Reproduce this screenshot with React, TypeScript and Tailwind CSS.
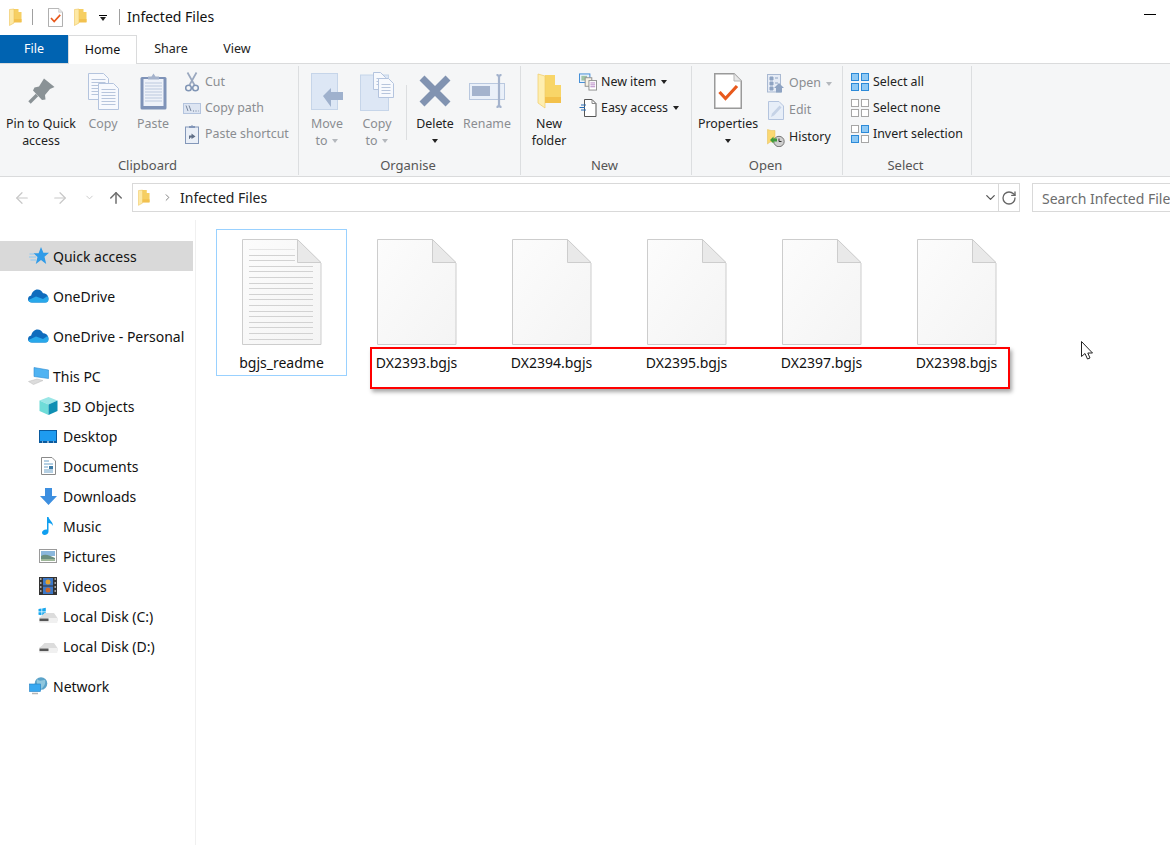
import type { ReactNode } from "react"
import { ArrowLeft, ArrowRight, ArrowUp, ChevronDown, ChevronRight, RotateCw } from "lucide-react"

function Folder({ w = 13, h = 18 }: { w?: number; h?: number }) {
  return (
    <svg width={w} height={h} viewBox="0 0 13 18" className="shrink-0">
      <path d="M4 1H9.5V4H12.5V14H4Z" fill="#f6cf63" />
      <path d="M0.5 1.5L5 1V15L0.5 17.5Z" fill="#fde9a5" stroke="#eec45c" strokeWidth="0.6" />
      <path d="M5 11H12.5V14.5H5Z" fill="#f2c14f" />
    </svg>
  )
}

function CheckDoc({ w, h }: { w: number; h: number }) {
  return (
    <svg width={w} height={h} viewBox="0 0 28 36" className="shrink-0">
      <path d="M0.75 0.75H20L27.25 8V35.25H0.75Z" fill="#fff" stroke="#9a9a9a" strokeWidth="1.5" />
      <path d="M20 0.75V8H27.25" fill="#e8e8e8" stroke="#b5b5b5" />
      <path d="M5.5 19L11.5 25.5L23 13" fill="none" stroke="#e8591c" strokeWidth="3.2" />
    </svg>
  )
}

function Pin() {
  return (
    <svg width="27" height="26" viewBox="0 0 27 26">
      <path d="M16 0.5L26.5 9L22 11L17 17L17.5 21.5L14 22L5 12.5L6.5 9.5L11 8.5Z" fill="#8a9296" />
      <path d="M9 17L1.5 24.5" stroke="#8a9296" strokeWidth="3.4" />
    </svg>
  )
}

function MiniDoc({ x, y, w, h, fill = "#f7f9fd", stroke = "#b4c4de" }: { x: number; y: number; w: number; h: number; fill?: string; stroke?: string }) {
  const lines: number[] = []
  for (let ly = y + 6; ly < y + h - 2; ly += 3) lines.push(ly)
  return (
    <g>
      <path d={`M${x} ${y}H${x + w - 5}L${x + w} ${y + 5}V${y + h}H${x}Z`} fill={fill} stroke={stroke} />
      {lines.map((ly) => (
        <path key={ly} d={`M${x + 3} ${ly}H${x + w - 3}`} stroke="#b7c5dc" strokeWidth="1" />
      ))}
    </g>
  )
}

function CopyIcon() {
  return (
    <svg width="31" height="37" viewBox="0 0 31 37">
      <MiniDoc x={0.5} y={0.5} w={20} h={26} />
      <MiniDoc x={10.5} y={10.5} w={20} h={26} />
    </svg>
  )
}

function PasteIcon() {
  return (
    <svg width="27" height="37" viewBox="0 0 27 37">
      <rect x="0.5" y="4" width="26" height="32.5" rx="1.5" fill="#7f93b8" />
      <rect x="3.5" y="6" width="20" height="27" fill="#eef2f9" />
      {[10, 13, 16, 19, 22, 25, 28].map((y) => (
        <path key={y} d={`M5 ${y}H22`} stroke="#bcc9de" />
      ))}
      <path d="M8 6V3.5H11.5L13.5 0.5L15.5 3.5H19V6.5H8Z" fill="#a5b3cc" />
    </svg>
  )
}

function CutIcon() {
  return (
    <svg width="14" height="20" viewBox="0 0 14 20">
      <path d="M2.5 0.5L9.5 13M11.5 0.5L4.5 13" stroke="#9aa8bf" strokeWidth="1.7" fill="none" />
      <circle cx="3.5" cy="16" r="2.8" fill="none" stroke="#8095b5" strokeWidth="1.5" />
      <circle cx="10.5" cy="16" r="2.8" fill="none" stroke="#8095b5" strokeWidth="1.5" />
    </svg>
  )
}

function CopyPathIcon() {
  return (
    <svg width="18" height="11" viewBox="0 0 18 11">
      <rect x="0.5" y="0.5" width="17" height="10" fill="#dde5f2" stroke="#b4c4de" />
      <path d="M3 2.5L5 8M6 2.5L8 8" stroke="#6d7c94" strokeWidth="0.9" />
      <path d="M10 8H11M12.5 8H13.5M15 8H15.6" stroke="#6d7c94" />
    </svg>
  )
}

function PasteShortcutIcon() {
  return (
    <svg width="14" height="19" viewBox="0 0 14 19">
      <rect x="0.5" y="2" width="13" height="16.5" fill="#eaeff7" stroke="#8397b9" />
      <path d="M4 3V1H6L7 0L8 1H10V3Z" fill="#8397b9" />
      <path d="M4 14V10.5H6.5V8.5L10.5 11.5L6.5 14V12.5H5.5L4.5 14Z" fill="#5f6e86" />
    </svg>
  )
}

function MoveIcon() {
  return (
    <svg width="33" height="37" viewBox="0 0 33 37">
      <rect x="0.5" y="0.5" width="26" height="36" fill="#dde7f5" stroke="#c6d5e9" />
      <path d="M12 25L20 17V21H32V29H20V36Z" fill="#9fb1cd" transform="translate(0 -2)" />
    </svg>
  )
}

function CopyToIcon() {
  return (
    <svg width="34" height="39" viewBox="0 0 34 39">
      <rect x="0.5" y="3" width="28" height="35.5" fill="#dde7f5" stroke="#c6d5e9" />
      <MiniDoc x={13.5} y={0.5} w={12} h={17} />
      <MiniDoc x={18.5} y={6.5} w={15} h={19} />
    </svg>
  )
}

function DeleteIcon() {
  return (
    <svg width="32" height="32" viewBox="0 0 32 32">
      <path d="M3 3L29 29M29 3L3 29" stroke="#8193b1" strokeWidth="7" />
    </svg>
  )
}

function RenameIcon() {
  return (
    <svg width="37" height="34" viewBox="0 0 37 34">
      <rect x="0.5" y="9.5" width="35" height="16" fill="#eaf0f9" stroke="#b9c8df" />
      <rect x="3" y="12" width="18" height="10" fill="#a4b3cd" />
      <path d="M27.5 1C29 1 30 2 30 3.5C30 2 31 1 32.5 1M30 3V31M27.5 33C29 33 30 32 30 30.5C30 32 31 33 32.5 33" fill="none" stroke="#a4b3cd" strokeWidth="2.2" />
    </svg>
  )
}

function NewItemIcon() {
  return (
    <svg width="19" height="18" viewBox="0 0 19 18">
      <rect x="0.5" y="0.5" width="11" height="9" fill="#e8f1fb" stroke="#3d8bd6" />
      <rect x="2.5" y="2.5" width="6" height="5" fill="#9fc3a4" />
      <rect x="6.5" y="4.5" width="7" height="9" fill="#f7f1e3" stroke="#8f8f8f" />
      <rect x="10.5" y="7.5" width="8" height="10" fill="#fff" stroke="#8f8f8f" />
      <path d="M12 10H17M12 12H17M12 14H17" stroke="#b27fc2" />
    </svg>
  )
}

function EasyAccessIcon() {
  return (
    <svg width="18" height="18" viewBox="0 0 18 18">
      <path d="M5.5 0.5H13L17 4.5V17.5H5.5Z" fill="#fff" stroke="#555" />
      <path d="M13 0.5V4.5H17" fill="none" stroke="#888" />
      <path d="M2 6H7M0.5 8.5H6M2 11H7" stroke="#2a6fb8" />
    </svg>
  )
}

function NewFolderIcon() {
  return (
    <svg width="25" height="36" viewBox="0 0 25 36">
      <path d="M8 2H18V12H24V30H8Z" fill="#f8d568" />
      <path d="M1 1L8 3V35L1 30Z" fill="#feeeb0" stroke="#f0cc68" strokeWidth="0.7" />
      <path d="M8 24H24V30H8Z" fill="#f3c14b" />
    </svg>
  )
}

function OpenIcon() {
  return (
    <svg width="18" height="19" viewBox="0 0 18 19">
      <rect x="0.5" y="0.5" width="13" height="17.5" fill="#e5ebf5" stroke="#a9b9d2" />
      <path d="M3 3H6V6H3ZM3 8H6V11H3ZM3 13H6V16H3ZM8 4H11M8 9H11" fill="#8ea3c2" stroke="#8ea3c2" />
      <path d="M7 14L12 9L17 14H15V18.5H9V14Z" fill="#8ea3c2" />
    </svg>
  )
}

function EditIcon() {
  return (
    <svg width="16" height="19" viewBox="0 0 16 19">
      <path d="M0.5 0.5H11L15.5 5V18.5H0.5Z" fill="#e7eef8" stroke="#b4c4de" />
      <path d="M3 16L4 12.5L11.5 4.5L13.5 6.5L6 14.5Z" fill="#c5d2e6" />
    </svg>
  )
}

function HistoryIcon() {
  return (
    <svg width="18" height="18" viewBox="0 0 18 18">
      <path d="M0.5 0.5L4 1.5H8V13H3L0.5 15Z" fill="#fbd872" stroke="#e4bd55" strokeWidth="0.5" />
      <circle cx="12" cy="12.5" r="5.2" fill="#cfcfcf" stroke="#777" />
      <path d="M12 9.5V12.5H14.5" stroke="#333" fill="none" />
      <path d="M3 11L6.5 7.5V9.5H10V12.5H6.5V14.5Z" fill="#3f9b3b" />
    </svg>
  )
}

function SelectIcon({ filled }: { filled: number[] }) {
  const cells = [
    [0, 0],
    [10, 0],
    [0, 10],
    [10, 10],
  ]
  return (
    <svg width="18" height="18" viewBox="0 0 18 18">
      {cells.map(([x, y], i) => (
        <rect
          key={i}
          x={x + 0.5}
          y={y + 0.5}
          width="7"
          height="7"
          fill={filled.includes(i) ? "#8ec9f5" : "#fff"}
          stroke={filled.includes(i) ? "#2c8ad8" : "#a6a6a6"}
        />
      ))}
    </svg>
  )
}

function FileIcon({ lines }: { lines?: boolean }) {
  const rows: number[] = []
  for (let y = 10; y < 102; y += 5.6) rows.push(Math.round(y) + 0.5)
  return (
    <svg width="80" height="107" viewBox="0 0 80 107">
      <defs>
        <linearGradient id="pageFill" x1="0" y1="0" x2="1" y2="1">
          <stop offset="0" stopColor="#fcfcfc" />
          <stop offset="1" stopColor="#f4f4f4" />
        </linearGradient>
      </defs>
      <path d="M0.5 0.5H55.5L79 24V105.5H0.5Z" fill="url(#pageFill)" stroke="#cdcdcd" />
      <path d="M55.5 0.5V23.5H79Z" fill="#e9e9e9" stroke="#cdcdcd" />
      {lines &&
        rows.map((y) => (
          <path key={y} d={`M7 ${y}H${y < 24 ? 53 : 71}`} stroke={y < 14 ? "#e5e5e5" : "#d2d2d2"} />
        ))}
    </svg>
  )
}

function StarIcon() {
  return (
    <svg width="20" height="18" viewBox="0 0 20 18">
      <path d="M12 0L14.4 5.8H20L15.5 9.8L17.2 17L12 13L6.8 17L8.5 10L4.5 6.2H9.6Z" fill="#2f9be8" />
      <path d="M0.5 7H5M0 10H7M1.5 13H7" stroke="#8cc8f2" />
    </svg>
  )
}

function CloudIcon() {
  return (
    <svg width="21" height="14" viewBox="0 0 21 14">
      <path d="M4 13.5C1.5 13.5 0 12 0 10C0 8 1.5 6.8 3.2 6.5C4 3 6.5 0.5 9.5 0.5C12 0.5 14 2 15 4.3C18 4.3 20.5 6.5 20.5 9.8C20.5 12 19 13.5 17 13.5Z" fill="#0f6cbd" />
      <path d="M4 13.5C1.5 13.5 0.5 12.5 0.5 11L8 7.5L15 10L19.5 7C20.5 8.5 20.8 11.5 20 12.5C19 13.5 18 13.5 17 13.5Z" fill="#28a8ea" />
    </svg>
  )
}

function PcIcon() {
  return (
    <svg width="21" height="18" viewBox="0 0 21 18">
      <path d="M6 0.5L20.5 3V11.5L6 9.5Z" fill="#4fb3f2" stroke="#2e8bd0" strokeWidth="0.6" />
      <path d="M0.5 14.5L9 12L15 13.5L5.5 17.5Z" fill="#dcdcdc" stroke="#bdbdbd" strokeWidth="0.5" />
    </svg>
  )
}

function CubeIcon() {
  return (
    <svg width="19" height="18" viewBox="0 0 19 18">
      <path d="M9.5 0L18.5 3.5L9.5 7.5L0.5 3.5Z" fill="#9ae6e6" />
      <path d="M0.5 3.5L9.5 7.5V18L0.5 14Z" fill="#6fdcd8" />
      <path d="M18.5 3.5L9.5 7.5V18L18.5 14Z" fill="#0f8fb3" />
    </svg>
  )
}

function DesktopIcon() {
  return (
    <svg width="18" height="13" viewBox="0 0 18 13">
      <rect width="18" height="13" fill="#0a5a9e" />
      <rect x="1" y="1" width="16" height="10" fill="#1e9bf0" />
      <path d="M3 12H4M8 12H10M14 12H15" stroke="#fff" />
    </svg>
  )
}

function DocumentsIcon() {
  return (
    <svg width="15" height="18" viewBox="0 0 15 18">
      <path d="M0.5 0.5H11L14.5 4V17.5H0.5Z" fill="#fff" stroke="#8a8a8a" />
      <path d="M3 4H8M3 7H12M3 10H7M3 13H12M3 15H12" stroke="#6aa0c8" />
      <rect x="8" y="9" width="4" height="3" fill="#3d7ca8" />
    </svg>
  )
}

function DownloadIcon() {
  return (
    <svg width="17" height="17" viewBox="0 0 17 17">
      <path d="M5 0H12V8H17L8.5 17L0 8H5Z" fill="#3d8fe0" />
    </svg>
  )
}

function MusicIcon() {
  return (
    <svg width="12" height="18" viewBox="0 0 12 18">
      <path d="M5 0H6.5C7 3 11 4.5 11 9C10 7 8.5 6 6.5 6V14.5C6.5 16.5 4.5 18 2.5 18C1 18 0 17 0 15.5C0 13.5 2.5 12 5 12.5Z" fill="#0f9ff0" />
    </svg>
  )
}

function PicturesIcon() {
  return (
    <svg width="18" height="14" viewBox="0 0 18 14">
      <rect x="0.5" y="0.5" width="17" height="13" fill="#fff" stroke="#9a9a9a" />
      <rect x="2" y="2" width="14" height="5" fill="#8ab7dc" />
      <path d="M2 7C6 4.5 10 6 16 9V12H2Z" fill="#6b8f80" />
      <path d="M2 10H16V12H2Z" fill="#9fb89a" />
    </svg>
  )
}

function VideosIcon() {
  return (
    <svg width="18" height="18" viewBox="0 0 18 18">
      <rect width="18" height="18" fill="#333" />
      <path d="M1 2H2.5M1 6H2.5M1 10H2.5M1 14H2.5M15.5 2H17M15.5 6H17M15.5 10H17M15.5 14H17" stroke="#ccc" strokeWidth="1.5" />
      <rect x="4" y="1" width="10" height="7.5" fill="#3c78c8" />
      <rect x="4" y="9.5" width="10" height="7.5" fill="#3c78c8" />
      <circle cx="9" cy="5" r="2.5" fill="#e0a030" />
      <circle cx="9" cy="13" r="2.5" fill="#c8682e" />
    </svg>
  )
}

function DiskIcon({ win }: { win?: boolean }) {
  return (
    <svg width="20" height="18" viewBox="0 0 20 18">
      {win && <path d="M0.5 2L3.5 1.5V4.5H0.5ZM4.2 1.4L7.8 0.8V4.5H4.2ZM0.5 5.2H3.5V8.2L0.5 7.8ZM4.2 5.2H7.8V8.9L4.2 8.3Z" fill="#17a7ee" />}
      <path d="M3.5 9L6.5 6H16L19.5 11V14H1V11Z" fill="#dcdcdc" />
      <path d="M1 11H19.5V15C19.5 15.5 19 16 18.5 16H2C1.5 16 1 15.5 1 15Z" fill="#f0f0f0" />
      <rect x="1.5" y="11.5" width="9" height="2.6" fill="#555" />
    </svg>
  )
}

function NetworkIcon() {
  return (
    <svg width="20" height="18" viewBox="0 0 20 18">
      <circle cx="12" cy="6.5" r="6.3" fill="#5ba3c9" />
      <path d="M8 2C10 5 14 3 16 3C17 6 15 10 12 12C9 10 7 6 8 2Z" fill="#8fc7de" />
      <rect x="0.5" y="7" width="11" height="7.5" fill="#38a8f0" stroke="#1f7fc4" strokeWidth="0.6" />
      <path d="M3 16.5H9" stroke="#b5b5b5" strokeWidth="1.5" />
    </svg>
  )
}

function Caret({ gray }: { gray?: boolean }) {
  return <span className={`inline-block w-0 h-0 border-x-[3.5px] border-x-transparent border-t-[4px] ${gray ? "border-t-[#b4b8bd]" : "border-t-[#222]"}`} />
}

function BigButton({ icon, lines, width, ml = 0, dim, caret }: { icon: ReactNode; lines: string[]; width: string; ml?: number; dim?: boolean; caret?: "line" | "inline" }) {
  return (
    <div className={`flex flex-col items-center shrink-0 ${width}`} style={{ marginLeft: ml }}>
      <div className="h-[51px] flex items-center justify-center pt-[3px]">{icon}</div>
      {lines.map((line, i) => (
        <div key={line} className={`leading-[17px] whitespace-nowrap flex items-center gap-[5px] ${dim ? "text-[#8a8d91]" : "text-[#222]"}`}>
          {line}
          {caret === "inline" && i === lines.length - 1 && <Caret gray />}
        </div>
      ))}
      {caret === "line" && (
        <div className="h-[17px] flex items-center">
          <Caret />
        </div>
      )}
    </div>
  )
}

function SmallButton({ icon, label, dim, caret, rowH = "h-[26px]" }: { icon: ReactNode; label: string; dim?: boolean; caret?: "gray" | "dark"; rowH?: string }) {
  return (
    <div className={`flex items-center ${rowH} whitespace-nowrap ${dim ? "text-[#8a8d91]" : "text-[#222]"}`}>
      <div className="w-[18px] mr-[4px] flex justify-center shrink-0">{icon}</div>
      {label}
      {caret && (
        <span className="ml-[5px] flex">
          <Caret gray={caret === "gray"} />
        </span>
      )}
    </div>
  )
}

function Group({ width, label, children }: { width: string; label: string; children: ReactNode }) {
  return (
    <div className={`flex flex-col shrink-0 h-[109px] mt-[2px] border-r border-[#dcdee0] ${width}`}>
      <div className="flex-1 flex items-start -mt-[2px]">{children}</div>
      <div className="text-center text-[13px] text-[#555] leading-[17px] mb-[1px] pr-[3px]">{label}</div>
    </div>
  )
}

function NavItem({ icon, label, child, active, gap }: { icon: ReactNode; label: string; child?: boolean; active?: boolean; gap?: boolean }) {
  return (
    <div className={`flex items-center h-[30px] w-[193px] whitespace-nowrap ${child ? "pl-[38px]" : "pl-[28px]"} ${gap ? "mt-[10px]" : ""} ${active ? "bg-[#d9d9d9]" : ""}`}>
      <div className={`flex justify-center shrink-0 ${child ? "w-[20px] mr-[5px]" : "w-[21px] mr-[4px]"}`}>{icon}</div>
      {label}
    </div>
  )
}

function Tile({ name, lines, selected }: { name: string; lines?: boolean; selected?: boolean }) {
  return (
    <div className={`w-[131px] h-[147px] shrink-0 flex flex-col items-center pt-[9px] border ${selected ? "border-[#99d1ff]" : "border-transparent"}`}>
      <FileIcon lines={lines} />
      <div className="mt-[7px] leading-[20px] text-[#111]">{name}</div>
    </div>
  )
}

export default function App() {
  return (
    <div className="w-[1170px] h-[845px] overflow-hidden bg-white flex flex-col text-[13px] font-['Noto_Sans',sans-serif] text-[#111]">
      {/* title bar */}
      <div className="h-[35px] flex items-center shrink-0 pl-[9px] pb-[1px]">
        <Folder />
        <div className="w-px h-[16px] bg-[#a0a0a0] ml-[10px] mr-[15px]" />
        <CheckDoc w={15} h={19} />
        <div className="ml-[11px]">
          <Folder />
        </div>
        <div className="ml-[12px] flex flex-col items-center gap-[1px] mt-[2px]">
          <div className="w-[8px] h-px bg-black" />
          <Caret />
        </div>
        <div className="w-px h-[16px] bg-[#a0a0a0] ml-[12px] mr-[7px]" />
        <div className="text-[14px] mb-[2px]">Infected Files</div>
        <div className="ml-auto mr-[14px] mb-[5px] w-[12px] h-px bg-black" />
      </div>

      {/* tabs */}
      <div className="h-[29px] flex shrink-0 border-b border-[#dadbdc] text-[12.5px]">
        <div className="w-[68px] h-[28px] bg-[#0063b1] text-white flex items-center justify-center pt-[1px]">File</div>
        <div className="w-[69px] h-[29px] bg-[#ffffff] border-x border-t border-[#dadbdc] flex items-center justify-center">Home</div>
        <div className="w-[68px] flex items-center justify-center text-[#222]">Share</div>
        <div className="w-[64px] flex items-center justify-center text-[#222]">View</div>
      </div>

      {/* ribbon */}
      <div className="h-[113px] flex shrink-0 bg-[#f5f6f7] border-b border-[#dadbdc] text-[12.4px]">
        <Group width="w-[299px]" label="Clipboard">
          <BigButton icon={<Pin />} lines={["Pin to Quick", "access"]} width="w-[76px]" ml={3} />
          <BigButton icon={<CopyIcon />} lines={["Copy"]} width="w-[40px]" ml={4} dim />
          <BigButton icon={<PasteIcon />} lines={["Paste"]} width="w-[40px]" ml={10} dim />
          <div className="ml-[10px] pt-[5px] text-[#8a8d91]">
            <SmallButton icon={<CutIcon />} label="Cut" dim />
            <SmallButton icon={<CopyPathIcon />} label="Copy path" dim />
            <SmallButton icon={<PasteShortcutIcon />} label="Paste shortcut" dim />
          </div>
        </Group>
        <Group width="w-[222px]" label="Organise">
          <BigButton icon={<MoveIcon />} lines={["Move", "to"]} width="w-[44px]" ml={6} dim caret="inline" />
          <BigButton icon={<CopyToIcon />} lines={["Copy", "to"]} width="w-[44px]" ml={6} dim caret="inline" />
          <div className="w-px h-[55px] bg-[#dcdee0] mt-[21px] ml-[7px]" />
          <BigButton icon={<DeleteIcon />} lines={["Delete"]} width="w-[50px]" ml={3} caret="line" />
          <BigButton icon={<RenameIcon />} lines={["Rename"]} width="w-[50px]" ml={2} dim />
        </Group>
        <Group width="w-[171px]" label="New">
          <BigButton icon={<NewFolderIcon />} lines={["New", "folder"]} width="w-[44px]" ml={6} />
          <div className="ml-[8px] pt-[5px]">
            <SmallButton icon={<NewItemIcon />} label="New item" caret="dark" />
            <SmallButton icon={<EasyAccessIcon />} label="Easy access" caret="dark" />
          </div>
        </Group>
        <Group width="w-[151px]" label="Open">
          <BigButton icon={<CheckDoc w={28} h={36} />} lines={["Properties"]} width="w-[64px]" ml={4} caret="line" />
          <div className="ml-[7px] pt-[6px]">
            <SmallButton icon={<OpenIcon />} label="Open" dim caret="gray" rowH="h-[27px]" />
            <SmallButton icon={<EditIcon />} label="Edit" dim rowH="h-[27px]" />
            <SmallButton icon={<HistoryIcon />} label="History" rowH="h-[27px]" />
          </div>
        </Group>
        <Group width="w-[129px]" label="Select">
          <div className="ml-[8px] pt-[5px]">
            <SmallButton icon={<SelectIcon filled={[0, 1, 2, 3]} />} label="Select all" />
            <SmallButton icon={<SelectIcon filled={[]} />} label="Select none" />
            <SmallButton icon={<SelectIcon filled={[1, 2]} />} label="Invert selection" />
          </div>
        </Group>
      </div>

      {/* address bar */}
      <div className="h-[43px] flex shrink-0 pt-[6px] overflow-hidden">
        <div className="h-[29px] w-[132px] shrink-0 flex items-center text-[#c8c8c8]">
          <ArrowLeft size={18} strokeWidth={1.6} className="ml-[13px]" />
          <ArrowRight size={18} strokeWidth={1.6} className="ml-[20px]" />
          <ChevronDown size={11} className="ml-[15px]" />
          <ArrowUp size={18} strokeWidth={2} className="ml-[12px] text-[#6e6e6e]" />
        </div>
        <div className="w-[888px] h-[29px] shrink-0 border border-[#d9d9d9] flex items-center pl-[5px]">
          <Folder w={12} h={17} />
          <ChevronRight size={11} className="ml-[12px] text-[#777]" />
          <div className="ml-[7px] text-[14px] text-[#222]">Infected Files</div>
          <ChevronDown size={15} className="ml-auto text-[#555]" />
          <div className="w-px h-full bg-[#d9d9d9]" />
          <div className="w-[20px] flex justify-center">
            <RotateCw size={16} className="text-[#666]" />
          </div>
        </div>
        <div className="ml-[12px] w-[200px] h-[29px] shrink-0 border border-[#d9d9d9] flex items-center pl-[9px] pt-[1px] text-[14px] text-[#6d6d6d] whitespace-nowrap">
          Search Infected Files
        </div>
      </div>

      {/* body */}
      <div className="flex-1 flex min-h-0">
        <div className="w-[196px] shrink-0 border-r border-[#f0f0f0] pt-[21px] text-[14px] text-[#111]">
          <NavItem icon={<StarIcon />} label="Quick access" active />
          <NavItem icon={<CloudIcon />} label="OneDrive" gap />
          <NavItem icon={<CloudIcon />} label="OneDrive - Personal" gap />
          <NavItem icon={<PcIcon />} label="This PC" gap />
          <NavItem icon={<CubeIcon />} label="3D Objects" child />
          <NavItem icon={<DesktopIcon />} label="Desktop" child />
          <NavItem icon={<DocumentsIcon />} label="Documents" child />
          <NavItem icon={<DownloadIcon />} label="Downloads" child />
          <NavItem icon={<MusicIcon />} label="Music" child />
          <NavItem icon={<PicturesIcon />} label="Pictures" child />
          <NavItem icon={<VideosIcon />} label="Videos" child />
          <NavItem icon={<DiskIcon win />} label="Local Disk (C:)" child />
          <NavItem icon={<DiskIcon />} label="Local Disk (D:)" child />
          <NavItem icon={<NetworkIcon />} label="Network" gap />
        </div>
        <div className="flex-1 relative pl-[20px] pt-[9px] text-[14px]">
          <div className="flex gap-[4px]">
            <Tile name="bgjs_readme" lines selected />
            <Tile name="DX2393.bgjs" />
            <Tile name="DX2394.bgjs" />
            <Tile name="DX2395.bgjs" />
            <Tile name="DX2397.bgjs" />
            <Tile name="DX2398.bgjs" />
          </div>
          {/* red annotation box */}
          <div className="absolute left-[174px] top-[127px] w-[640px] h-[42px] border-2 border-[#ff0000] shadow-[2px_3px_4px_rgba(0,0,0,0.35)]" />
          {/* mouse cursor */}
          <svg width="13" height="19" viewBox="0 0 13 19" className="absolute left-[885px] top-[121px]">
            <path d="M0.5 0.5V15.5L4 12.5L6.5 18L9 17L6.8 12H11.5Z" fill="#fff" stroke="#222" />
          </svg>
        </div>
      </div>
    </div>
  )
}
